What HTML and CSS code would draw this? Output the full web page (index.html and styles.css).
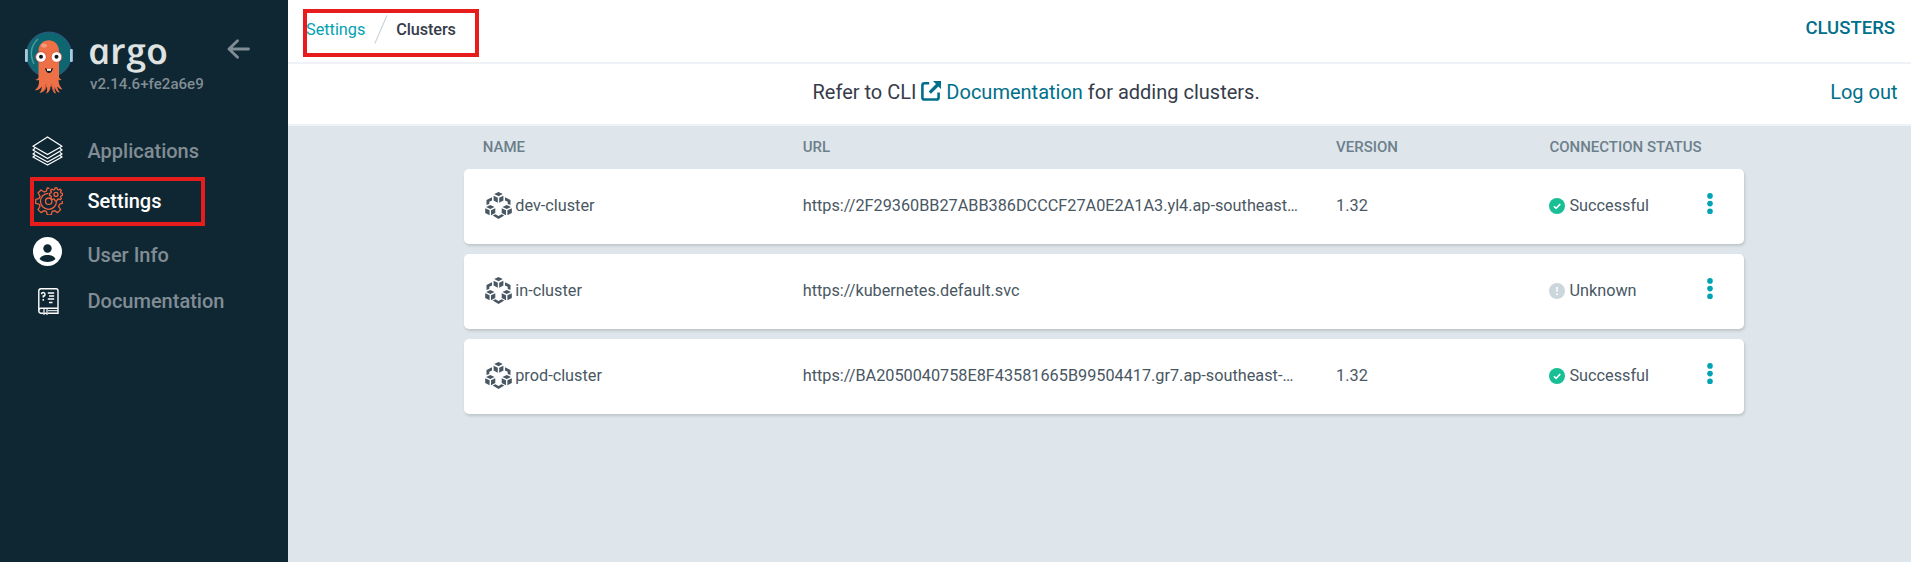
FILE: index.html
```html
<!DOCTYPE html>
<html lang="en">
<head>
<meta charset="utf-8">
<title>Clusters</title>
<link rel="stylesheet" href="styles.css">
</head>
<body>
<svg class="defs" aria-hidden="true">
  <symbol id="cube-ring" viewBox="0 0 27 27">
    <g fill="#495763">
      <path d="M13.500 0l4.300 2-4.300 2.200-4.300-2.200zM8.600 3.700l4.200 2.100v5L8.600 8.600zM18.400 3.700l-4.200 2.100v5l4.200-2.200z"/>
      <path d="M5.300 13l4.200 2-4.200 2.100-4.200-2.100zM.2 16.200l4.400 2.100v5l-4.400-2.300zM10.300 16.200L6 18.300v5l4.300-2.300z"/>
      <path d="M21.700 13l4.200 2-4.200 2.100-4.200-2.100zM16.700 16.200l4.300 2.100v5l-4.300-2.300zM26.800 16.200l-4.400 2.100v5l4.400-2.300z"/>
      <path d="M7 5.200v3.200L4.300 9.700v2.200L1.500 13V7.900zM20 5.200v3.200l2.700 1.300v2.200l2.800 1.100V7.900zM7.700 23.600l2.700-1.300 3.100 1.700 3.100-1.700 2.700 1.300-5.800 3.400z"/>
    </g>
  </symbol>
  <symbol id="ok" viewBox="0 0 16 16"><circle cx="8" cy="8" r="8" fill="#18be94"/><path d="M4.900 8.200l2.200 2.200 4.200-4.400" fill="none" stroke="#fff" stroke-width="1.600"/></symbol>
  <symbol id="unknown" viewBox="0 0 16 16"><circle cx="8" cy="8" r="8" fill="#ccd6dd"/><path d="M7.100 4h1.800l-.3 5H7.400z" fill="#fff"/><circle cx="8" cy="11.200" r="1" fill="#fff"/></symbol>
  <symbol id="dots" viewBox="0 0 6 21"><g fill="#00a2b3"><circle cx="3" cy="2.900" r="2.800"/><circle cx="3" cy="10.600" r="2.800"/><circle cx="3" cy="18.400" r="2.800"/></g></symbol>
</svg>
<div class="layout">
  <aside class="sidebar">
    <div class="brand">
      <svg class="mascot" viewBox="0 0 48 63" width="48" height="63">
        <circle cx="24" cy="23.500" r="22.300" fill="#0d6670" stroke="#285b7b" stroke-width="1.200"/>
        <path d="M13 8C5 15 5 25 9 33" fill="none" stroke="#4c9a9d" stroke-width="1.500"/>
        <rect x="0" y="18" width="2.800" height="13" rx="1" fill="#a9cbe2"/><rect x="45" y="18" width="2.800" height="13" rx="1" fill="#a9cbe2"/>
        <path d="M13.500 20C13.500 5.500 34 5.500 34 20V46q.5 2 2.700 2.800-2 .7-3.200 0 .2 6 4 9.700-3-.2-5.500-3 .8 4 2.800 6-3.500.2-5.300-6-.2 4 1.500 7-3.500-.4-4.200-7h-1.400q0 5-4.200 7.200 1.500-4 .8-7.400Q20 61 14.500 62q2.500-3 2.400-6.500-2.800 4-6.900 3.600 4.600-3.500 4-10.200-1.500.8-4-.2 3.500-.4 3.500-3z" fill="#ee7046"/>
        <ellipse cx="19" cy="14.500" rx="2.800" ry="2.100" fill="#f79b7d"/>
        <path d="M21 53q0 5-3 8M26.500 53q0 5 3 8" fill="none" stroke="#b9452c" stroke-width=".7"/>
        <circle cx="16" cy="26" r="5.300" fill="#fff" stroke="#d64b36" stroke-width=".8"/><circle cx="31.500" cy="26" r="5.300" fill="#fff" stroke="#d64b36" stroke-width=".8"/>
        <circle cx="16" cy="25.700" r="2" fill="#111a20"/><circle cx="31.500" cy="25.700" r="2" fill="#111a20"/>
        <path d="M20 37q4 2.500 8 0-1 5-4 5t-4-5z" fill="#111a20"/><path d="M22 38h4v1.800h-4z" fill="#fff"/>
      </svg>
      <div class="brand-text">
        <span class="wordmark">argo</span>
        <span class="version">v2.14.6+fe2a6e9</span>
      </div>
      <svg class="collapse" viewBox="0 0 23 20" width="23" height="20"><path d="M10.500 1.700L2 10l8.500 8.300M2.500 10H21.500" fill="none" stroke="#818d94" stroke-width="2.800" stroke-linecap="round" stroke-linejoin="round"/></svg>
    </div>
    <nav class="nav">
      <a class="nav-item">
        <svg width="31" height="30" viewBox="0 0 31 30" fill="none" stroke="#fff" stroke-width="1.300" stroke-linejoin="round"><path d="M15.500 1L30 10.200 15.500 18.500 1 10.200z"/><path d="M3 12.200L1 14l14.500 8.500L30 14l-2-1.800M3 16.500L1 18l14.500 8L30 18l-2-1.500M3 19.500L1 21l14.500 8L30 21l-2-1.500"/></svg>
        <span>Applications</span>
      </a>
      <a class="nav-item active">
        <svg width="28" height="28" viewBox="0 0 28 28" fill="none" stroke="#ef613f" stroke-width="1.300" stroke-linejoin="round">
          <path d="M14.500 1.500l-2.300-.6-.8 3.300-2.200.8L6 3 3 6l2 3.200-1 2.400-3.300.8v4l3.300.7 1 2.400-2 3.100 3 3 3.100-2 2.400 1 .8 3.200h4l.7-3.200 2.500-1 3.100 2 3-3-2-3.100 1-2.400 2.700-.7v-2.500M13.200 6.300a8 8 0 1 0 8.300 8"/>
          <circle cx="13.700" cy="14.200" r="3.200"/>
          <path d="M20 .8h2l.4 1.700 1.200.5 1.500-.9 1.300 1.300-.9 1.500.5 1.200 1.500.4v1.900l-1.500.4-.5 1.200.9 1.500-1.300 1.300-1.500-.9-1.200.5-.4 1.500h-2l-.4-1.500-1.200-.5-1.500.9-1.400-1.300.9-1.500-.5-1.200-1.500-.4V6.500l1.500-.4.5-1.200-.9-1.500 1.400-1.300 1.500.9 1.200-.5z"/><circle cx="21" cy="7.400" r="2"/>
        </svg>
        <span>Settings</span>
      </a>
      <a class="nav-item user">
        <svg width="29" height="29" viewBox="0 0 29 29"><circle cx="14.500" cy="14.500" r="14.500" fill="#fff"/><circle cx="14.500" cy="11.500" r="4.200" fill="#0f2733"/><path d="M6.500 22c2-5.500 14-5.500 16 0-3.500 4-12.500 4-16 0z" fill="#0f2733"/></svg>
        <span>User Info</span>
      </a>
      <a class="nav-item">
        <svg class="book" width="21" height="27" viewBox="0 0 21 27" fill="none" stroke="#fff" stroke-width="1.400"><path d="M5.500 25.300H2.800Q.8 25 .8 22.800V3Q.8.800 3 .8H18q2 0 2 2V25.300H9.500M20 20.200H3Q.8 20.200.8 22.800"/><path d="M10 22.700h10" stroke-width="1"/><path d="M6 20.500v5.700l1.500-1.200L9 26.200v-5.700" stroke-width="1.200"/><path d="M9.800 5h6.400M11 8h5.200M9.800 11h6.400M11 14.500h3.500" stroke-width="1.300"/><path d="M3.400 6.200Q3.700 4.500 5.300 4.500T7 6.300 5.300 8v1.500M5.300 11v1.800" stroke-width="1.500"/></svg>
        <span>Documentation</span>
      </a>
    </nav>
    <div class="mark mark-nav"></div>
  </aside>
  <main class="main">
    <header class="topbar">
      <div class="crumbs">
        <a>Settings</a>
        <svg width="14" height="29" viewBox="0 0 14 29"><path d="M13 .5L.8 28.500" stroke="#cbd5db" stroke-width="1.200"/></svg>
        <strong>Clusters</strong>
      </div>
      <span class="page-title">CLUSTERS</span>
      <div class="mark mark-crumbs"></div>
    </header>
    <div class="toolbar">
      <p class="hint">Refer to CLI <a><svg width="20" height="20" viewBox="0 0 20 20"><path d="M8.200 2.300H3.500Q1.400 2.300 1.400 4.400v12q0 2.100 2.100 2.100H15.500q2.100 0 2.100-2.100V11.500" fill="none" stroke="#006f8a" stroke-width="2.600"/><path d="M12 0h8v8l-2.600-2.500-7.500 7.300-2.200-2.200 7.300-7.500z" fill="#006f8a"/></svg> Documentation</a> for adding clusters.</p>
      <a class="logout">Log out</a>
    </div>
    <section class="table">
      <div class="row head"><span>NAME</span><span>URL</span><span>VERSION</span><span>CONNECTION STATUS</span></div>
      <div class="row card">
        <span class="name"><svg width="27" height="27"><use href="#cube-ring"/></svg>dev-cluster</span>
        <span class="url">https://2F29360BB27ABB386DCCCF27A0E2A1A3.yl4.ap-southeast…</span>
        <span>1.32</span>
        <span class="status"><svg width="16" height="16"><use href="#ok"/></svg>Successful</span>
        <svg class="menu" width="6" height="21"><use href="#dots"/></svg>
      </div>
      <div class="row card">
        <span class="name"><svg width="27" height="27"><use href="#cube-ring"/></svg>in-cluster</span>
        <span class="url">https://kubernetes.default.svc</span>
        <span></span>
        <span class="status"><svg width="16" height="16"><use href="#unknown"/></svg>Unknown</span>
        <svg class="menu" width="6" height="21"><use href="#dots"/></svg>
      </div>
      <div class="row card">
        <span class="name"><svg width="27" height="27"><use href="#cube-ring"/></svg>prod-cluster</span>
        <span class="url">https://BA2050040758E8F43581665B99504417.gr7.ap-southeast-…</span>
        <span>1.32</span>
        <span class="status"><svg width="16" height="16"><use href="#ok"/></svg>Successful</span>
        <svg class="menu" width="6" height="21"><use href="#dots"/></svg>
      </div>
    </section>
  </main>
</div>
</body>
</html>
```
FILE: styles.css
```css
* { box-sizing: border-box; }
body { margin: 0; font-family: Roboto, "Liberation Sans", sans-serif; color: #363c4a; overflow: hidden; }
.defs { display: none; }
svg { flex: none; }
.layout { display: flex; height: 562px; }

.sidebar { position: relative; flex: none; width: 288px; background: #0f2733; }
.brand { display: flex; align-items: flex-start; height: 126px; padding: 31px 0 0 25px; }
.brand-text { display: flex; flex-direction: column; width: 137px; margin-left: 17px; }
/* Upright cut of the italic, which has the single-storey "a" of the logo */
.wordmark { align-self: flex-start; height: 44px; font: italic 600 36px/40px "Open Sans", sans-serif; color: #dee2e1; transform: scaleX(1.060) skewX(12deg); transform-origin: 0 32px; }
.version { font-size: 15.100px; line-height: 18px; font-weight: 500; color: #818d94; }
.collapse { margin-top: 8px; }
.nav-item { display: flex; align-items: center; height: 50px; padding-left: 32px; font-size: 20px; font-weight: 500; color: #818d94; }
.nav-item svg { margin-right: 24.500px; }
.nav-item.active { color: #fff; }
.nav-item.active svg { margin: 0 25px 0 2.500px; }
.nav-item.user svg { margin: 0 25.500px 0 1px; }
.nav-item.user span { padding-top: 7px; }
.nav-item .book { margin: 0 28.500px 0 6px; }

.mark { position: absolute; border: 4px solid #e71c1c; }
.mark-nav { left: 30px; top: 177px; width: 175px; height: 49px; }
.mark-crumbs { left: 15px; top: 9px; width: 176px; height: 48px; }

.main { flex: 1; min-width: 0; background: #dee6eb; }
.topbar { position: relative; display: flex; justify-content: space-between; height: 64px; padding: 0 16px 4px 18px; background: #fff; border-bottom: 2px solid #eff3f7; }
.crumbs { display: flex; align-items: center; gap: 8.500px; font-size: 16.250px; }
.crumbs a { color: #00a2b3; }
.crumbs strong { font-weight: 500; letter-spacing: -.12px; }
.page-title { align-self: center; padding-bottom: 2px; font-size: 18.500px; font-weight: 500; color: #006f8a; }
.toolbar { display: flex; justify-content: space-between; align-items: center; height: 62px; padding: 0 13.500px 4px 524.500px; background: #fff; border-bottom: 2px solid #eff3f7; font-size: 20px; }
.hint { margin: 0; }
.hint a, .logout { color: #006f8a; }
.hint svg { vertical-align: -2px; }

.table { width: 1280px; margin-left: 176px; font-size: 16.250px; color: #495763; }
.row { display: grid; grid-template-columns: 320px 533.330px 213.330px 1fr auto; align-items: center; padding-left: 18.750px; }
.head { height: 43px; padding-bottom: 2px; font-size: 15px; font-weight: 500; color: #6d7f8b; }
.card { height: 75px; margin-bottom: 10px; padding-right: 31.500px; padding-bottom: 2px; background: #fff; border-radius: 5px; box-shadow: 1px 2px 3px rgba(0, 0, 0, .14); }
.name { display: flex; align-items: center; gap: 3px; padding-left: 2.500px; }
.url { white-space: nowrap; }
.status { display: flex; align-items: center; gap: 4px; }
.menu { margin-top: -4px; }
```
